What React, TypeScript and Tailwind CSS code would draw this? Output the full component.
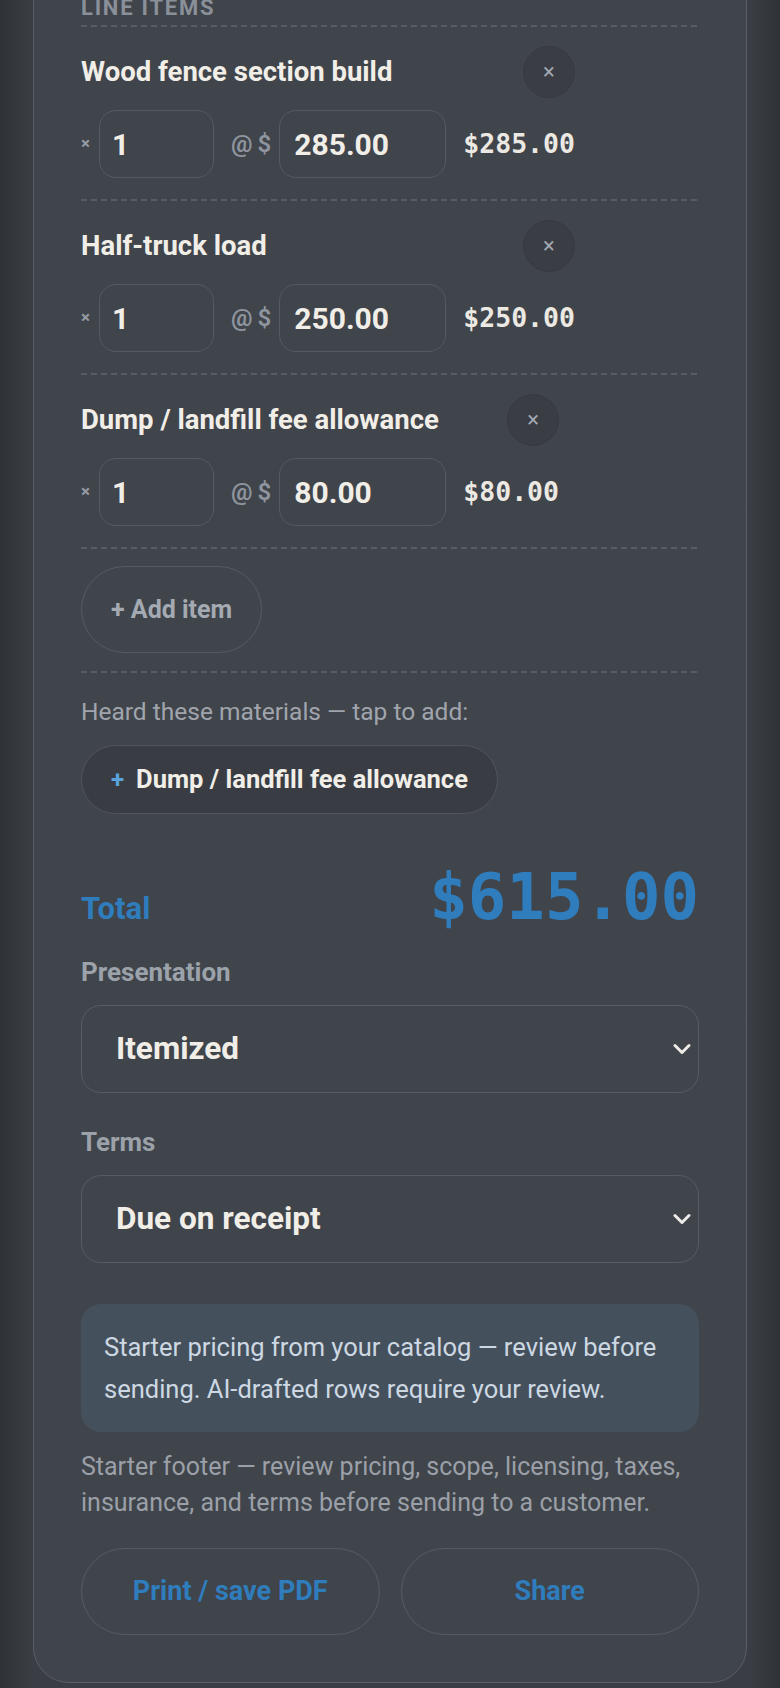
import React from 'react';

const items = [
  { name: 'Wood fence section build', qty: '1', price: '285.00', total: '$285.00' },
  { name: 'Half-truck load', qty: '1', price: '250.00', total: '$250.00' },
  { name: 'Dump / landfill fee allowance', qty: '1', price: '80.00', total: '$80.00' },
];

type Item = (typeof items)[number];

function Dash() {
  return (
    <div className="h-[2px] bg-[repeating-linear-gradient(90deg,#585d65_0px,#585d65_6px,transparent_6px,transparent_10px)]" />
  );
}

function LineItem({ item }: { item: Item }) {
  return (
    <div className="pt-[19px] pb-[21px]">
      <div className="inline-flex flex-col gap-[12px]">
        <div className="flex items-center justify-between">
          <h3 className="text-[27.5px] font-bold leading-[30px] text-[#f1eee8]">{item.name}</h3>
          <button className="flex h-[52px] w-[52px] items-center justify-center rounded-full border border-[#373a40] bg-[#3a3e44] text-[22px] leading-none text-[#a3a9b2]">
            ×
          </button>
        </div>
        <div className="flex items-center">
          <span className="mr-[9px] text-[17px] font-bold text-[#959ba4]">×</span>
          <input
            readOnly
            value={item.qty}
            className="h-[68px] w-[115px] rounded-[17px] border-[1.5px] border-[#555a62] bg-transparent pl-[12px] text-[30px] font-bold text-[#f1eee8] outline-none"
          />
          <span className="ml-[17px] text-[24px] font-semibold text-[#8f959e]">@</span>
          <span className="ml-[5px] mr-[8px] text-[24px] font-semibold text-[#8f959e]">$</span>
          <input
            readOnly
            value={item.price}
            className="h-[68px] w-[167px] rounded-[17px] border-[1.5px] border-[#555a62] bg-transparent pl-[14px] text-[30px] font-bold text-[#f1eee8] outline-none"
          />
          <span className="ml-[17px] font-['DejaVu_Sans_Mono',monospace] text-[26.5px] font-bold text-[#ece9e3]">
            {item.total}
          </span>
        </div>
      </div>
    </div>
  );
}

function Chevron() {
  return (
    <svg width="18" height="11" viewBox="0 0 18 11" fill="none" className="pointer-events-none absolute right-[8px] top-1/2 -translate-y-1/2">
      <polyline points="2,2 9,9 16,2" stroke="#eeece8" strokeWidth="3" strokeLinecap="round" strokeLinejoin="round" />
    </svg>
  );
}

function SelectField({ label, value, className }: { label: string; value: string; className?: string }) {
  return (
    <div className={className}>
      <label className="block text-[26px] font-bold leading-[28px] text-[#9ca2aa]">{label}</label>
      <div className="relative mt-[19px]">
        <select
          defaultValue={value}
          className="h-[88px] w-full appearance-none rounded-[20px] border-[1.5px] border-[#575c64] bg-transparent pl-[34px] text-[31.5px] font-bold text-[#f1eee8] outline-none"
        >
          <option>{value}</option>
        </select>
        <Chevron />
      </div>
    </div>
  );
}

export default function App() {
  return (
    <div className="min-h-[1688px] bg-[linear-gradient(90deg,#2f3237_0px,#3a3d43_30px,#3a3d43_calc(100%-30px),#2f3237_100%)] pb-[5px] font-['Roboto',sans-serif]">
      <div className="mx-[33px] -mt-[40px] rounded-b-[36px] border border-[#5a5e66] bg-[#40444b] px-[47px] pt-[34px] pb-[47px]">
        <h2 className="text-[22px] font-bold uppercase leading-[26px] tracking-[0.08em] text-[#8a9099]">Line items</h2>
        <div className="mt-[4px]">
          <Dash />
          {items.map((item) => (
            <div key={item.name}>
              <LineItem item={item} />
              <Dash />
            </div>
          ))}
        </div>

        <button className="mt-[17px] flex h-[87px] items-center rounded-full border-[1.5px] border-[#565b63] px-[29px] text-[25px] font-bold text-[#a4aab2]">
          + Add item
        </button>
        <div className="mt-[18px]">
          <Dash />
        </div>

        <p className="mt-[23px] text-[24.5px] leading-[32px] text-[#a0a5ad]">Heard these materials — tap to add:</p>
        <button className="mt-[17px] flex h-[69px] items-center gap-[12px] rounded-full border-[1.5px] border-[#50555d] bg-[#393d43] px-[29px]">
          <span className="text-[24px] font-bold text-[#5aa2dc]">+</span>
          <span className="text-[25.5px] font-bold text-[#f1eee8]">Dump / landfill fee allowance</span>
        </button>

        <div className="mt-[51px] flex items-baseline justify-between">
          <span className="text-[31px] font-bold text-[#2f7dbd]">Total</span>
          <span className="font-['DejaVu_Sans_Mono',monospace] text-[64px] font-bold leading-none text-[#2f7dbd]">
            $615.00
          </span>
        </div>

        <SelectField label="Presentation" value="Itemized" className="mt-[25px]" />
        <SelectField label="Terms" value="Due on receipt" className="mt-[35px]" />

        <div className="mt-[41px] rounded-[20px] bg-[#44515c] px-[23px] py-[22px] text-[25.5px] leading-[42px] text-[#cdd8e3]">
          Starter pricing from your catalog — review before sending. AI-drafted rows require your review.
        </div>

        <p className="mt-[17px] text-[25px] leading-[36px] text-[#9ba0a8]">
          Starter footer — review pricing, scope, licensing, taxes, insurance, and terms before sending to a customer.
        </p>

        <div className="mt-[27px] grid grid-cols-2 gap-[21px]">
          <button className="h-[87px] rounded-full border-[1.5px] border-[#565b63] text-[27px] font-bold text-[#2f7dbd]">
            Print / save PDF
          </button>
          <button className="h-[87px] rounded-full border-[1.5px] border-[#565b63] text-[27px] font-bold text-[#2f7dbd]">
            Share
          </button>
        </div>
      </div>
    </div>
  );
}
